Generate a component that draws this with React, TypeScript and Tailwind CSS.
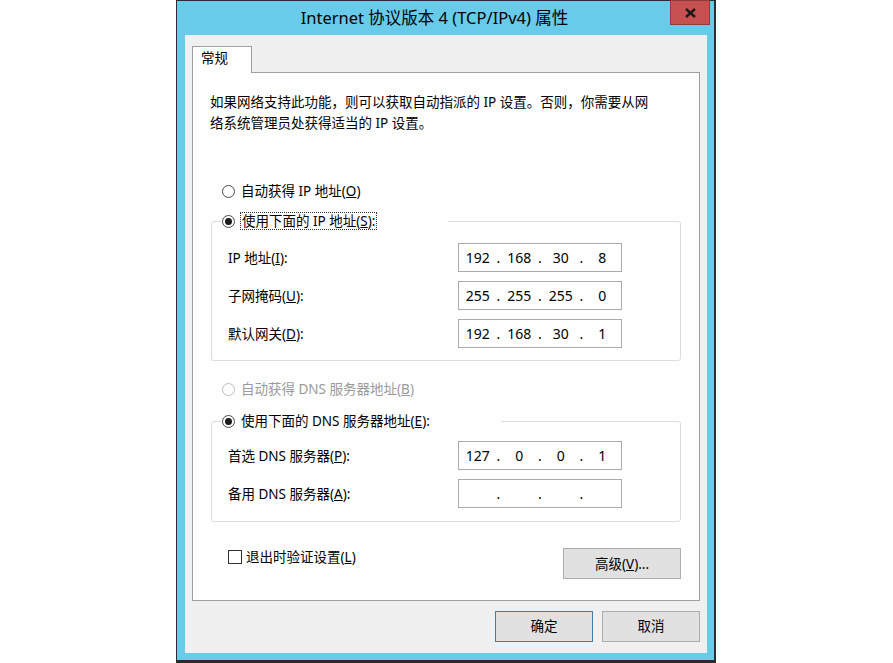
import React from "react";

const F = "font-['Noto_Sans','Noto_Sans_CJK_SC',sans-serif]";

function Radio({ checked, disabled }: { checked?: boolean; disabled?: boolean }) {
  return (
    <span
      className={`w-[13px] h-[13px] rounded-full border bg-white flex items-center justify-center shrink-0 ${
        disabled ? "border-[#bdbdbd]" : "border-[#4a4a4a]"
      }`}
    >
      {checked && <span className="w-[7px] h-[7px] rounded-full bg-[#1c1c1c]" />}
    </span>
  );
}

function IPField({ v }: { v: string[] }) {
  return (
    <div className="w-[164px] h-[29px] border border-[#ababab] bg-white flex items-center text-[14px] text-black">
      {v.map((x, i) => (
        <React.Fragment key={i}>
          {i > 0 && <span className="w-[4px] flex justify-center">.</span>}
          <span className="flex-1 text-center">{x}</span>
        </React.Fragment>
      ))}
    </div>
  );
}

function Row({ label, v }: { label: React.ReactNode; v: string[] }) {
  return (
    <div className="flex items-center h-[29px] ml-[7px]">
      <span className="w-[230px]">{label}</span>
      <IPField v={v} />
    </div>
  );
}

function Btn({ children, def, className }: { children: React.ReactNode; def?: boolean; className: string }) {
  return (
    <div
      className={`${className} bg-[#e1e1e1] border flex items-center justify-center text-[13.5px] ${
        def ? "border-[#3c7fb1]" : "border-[#adadad]"
      }`}
    >
      {children}
    </div>
  );
}

export default function App() {
  return (
    <div className={`w-[893px] h-[663px] bg-white ${F}`}>
      <div className="ml-[176px] w-[540px] h-[663px] bg-[#69cbea] border-l border-t border-r-2 border-b-[3px] border-[#2c2c2c] relative flex flex-col">
        {/* title bar */}
        <div className="h-[34px] flex items-center justify-center pr-[22px] text-[16.5px] text-black">
          Internet 协议版本 4 (TCP/IPv4) 属性
        </div>
        <div className="absolute top-[-1px] right-[4px] w-[40px] h-[25px] bg-[#c75050] border border-[#8e3b3b] flex items-center justify-center">
          <svg width="11" height="10" viewBox="0 0 11 10">
            <path d="M1 1 L10 9 M10 1 L1 9" stroke="#1a1a1a" strokeWidth="2.4" />
          </svg>
        </div>

        {/* client */}
        <div className="ml-[8px] w-[522px] h-[618px] bg-[#f0f0f0] px-[7px] pt-[11px] flex flex-col">
          <div className="w-[60px] h-[27px] border border-b-0 border-[#a0a0a0] bg-white -mb-px relative z-10 pl-[8px] pt-[1px] leading-[20px] text-[13.5px] text-black">
            常规
          </div>
          <div className="h-[529px] border border-[#a0a0a0] bg-white flex flex-col text-[13.5px] leading-[20px] text-black">
            <p className="mt-[19px] ml-[17px] leading-[21px] whitespace-nowrap">
              如果网络支持此功能，则可以获取自动指派的 IP 设置。否则，你需要从网
              <br />
              络系统管理员处获得适当的 IP 设置。
            </p>

            <div className="mt-[47px] ml-[29px] h-[20px] flex items-center gap-[6px]">
              <Radio />
              <span>
                自动获得 IP 地址(<u>O</u>)
              </span>
            </div>

            <fieldset className="ml-[18px] w-[470px] mt-[10px] border border-[#dcdcdc] rounded-[3px] pl-[9px] pb-[12px]">
              <legend className="w-[227px] h-[20px]">
                <div className="flex items-center h-[20px] pl-[1px] gap-[5px]">
                  <Radio checked />
                  <span className="border border-dotted border-[#333] leading-[16px] px-[1px]">
                    使用下面的 IP 地址(<u>S</u>):
                  </span>
                </div>
              </legend>
              <div className="mt-[12px] flex flex-col gap-[9px]">
                <Row
                  label={
                    <>
                      IP 地址(<u>I</u>):
                    </>
                  }
                  v={["192", "168", "30", "8"]}
                />
                <Row
                  label={
                    <>
                      子网掩码(<u>U</u>):
                    </>
                  }
                  v={["255", "255", "255", "0"]}
                />
                <Row
                  label={
                    <>
                      默认网关(<u>D</u>):
                    </>
                  }
                  v={["192", "168", "30", "1"]}
                />
              </div>
            </fieldset>

            <div className="mt-[18px] ml-[29px] h-[20px] flex items-center gap-[6px] text-[#9b9b9b]">
              <Radio disabled />
              <span>
                自动获得 DNS 服务器地址(<u>B</u>)
              </span>
            </div>

            <fieldset className="ml-[18px] w-[470px] mt-[12px] border border-[#dcdcdc] rounded-[3px] pl-[9px] pb-[13px]">
              <legend className="w-[280px] h-[20px]">
                <div className="flex items-center h-[20px] pl-[1px] gap-[6px]">
                  <Radio checked />
                  <span>
                    使用下面的 DNS 服务器地址(<u>E</u>):
                  </span>
                </div>
              </legend>
              <div className="mt-[10px] flex flex-col gap-[9px]">
                <Row
                  label={
                    <>
                      首选 DNS 服务器(<u>P</u>):
                    </>
                  }
                  v={["127", "0", "0", "1"]}
                />
                <Row
                  label={
                    <>
                      备用 DNS 服务器(<u>A</u>):
                    </>
                  }
                  v={["", "", "", ""]}
                />
              </div>
            </fieldset>

            <div className="mt-[26px] ml-[35px] mr-[18px] flex justify-between items-start">
              <div className="-mt-px h-[20px] flex items-center gap-[4px]">
                <span className="w-[14px] h-[14px] border border-[#333] bg-white" />
                <span>
                  退出时验证设置(<u>L</u>)
                </span>
              </div>
              <Btn className="w-[118px] h-[31px]">
                高级(<u>V</u>)...
              </Btn>
            </div>
          </div>

          <div className="mt-[10px] flex justify-end gap-[9px]">
            <Btn def className="w-[98px] h-[31px]">
              确定
            </Btn>
            <Btn className="w-[98px] h-[31px]">取消</Btn>
          </div>
        </div>
      </div>
    </div>
  );
}
